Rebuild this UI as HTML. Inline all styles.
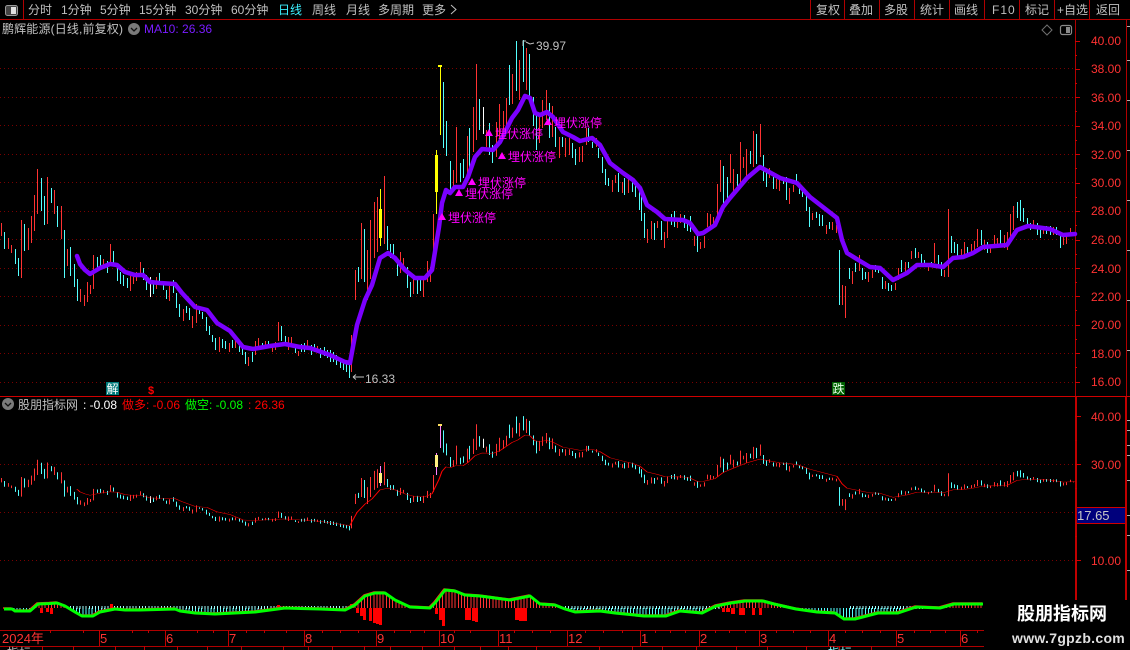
<!DOCTYPE html>
<html><head><meta charset="utf-8"><style>
html,body{margin:0;padding:0;background:#000;width:1130px;height:650px;overflow:hidden}
svg{display:block}
text{font-family:"Liberation Sans","Noto Sans CJK SC",sans-serif;font-size:12px;fill:#c0c0c0}
.y{fill:#ff3232}
.m{fill:#ff00ff}
.t{fill:#ff3232;font-size:13px}
</style></head><body>
<svg xmlns="http://www.w3.org/2000/svg" width="1130" height="650" viewBox="0 0 1130 650">
<defs>
<g id="bars" fill="none" stroke-width="1" shape-rendering="crispEdges">
<path stroke="#ff3232" d="M1.5 223V236M8.5 238V249M11.5 245V253M21.5 220V278M28.5 228V250M31.5 216V243M34.5 195V231M37.5 169V214M47.5 177V224M54.5 190V214M61.5 206V239M67.5 249V266M80.5 289V302M84.5 295V306M87.5 282V302M90.5 285V294M93.5 255V289M103.5 259V268M110.5 244V263M130.5 273V291M133.5 273V284M136.5 272V281M140.5 262V274M156.5 277V289M169.5 286V301M183.5 309V321M192.5 316V328M196.5 304V323M219.5 337V352M229.5 343V352M235.5 340V348M248.5 357V366M255.5 341V355M258.5 338V347M265.5 341V348M272.5 344V352M275.5 342V350M278.5 322V341M288.5 337V350M291.5 337V347M298.5 351V356M307.5 340V350M317.5 346V353M351.5 335V372M355.5 270V300M361.5 223V279M367.5 250V300M370.5 220V279M374.5 202V258M377.5 197V252M384.5 176V244M400.5 252V273M403.5 258V267M413.5 276V294M423.5 276V297M427.5 261V282M430.5 267V282M433.5 214V264M453.5 170V190M456.5 127V183M467.5 136V177M473.5 107V152M476.5 64V140M486.5 130V147M496.5 122V157M499.5 104V145M503.5 111V137M506.5 98V127M512.5 74V104M519.5 60V100M526.5 48V90M539.5 113V143M542.5 100V128M546.5 90V120M552.5 106V137M559.5 137V158M565.5 138V157M569.5 138V155M579.5 147V162M582.5 146V162M586.5 128V145M596.5 138V147M612.5 180V192M615.5 175V183M622.5 182V193M628.5 177V193M647.5 229V243M651.5 221V239M657.5 221V228M664.5 232V248M667.5 218V238M677.5 218V228M680.5 214V223M694.5 236V246M700.5 242V249M704.5 236V248M707.5 213V227M710.5 214V227M713.5 217V225M717.5 184V220M720.5 160V192M730.5 154V183M733.5 169V192M740.5 142V183M743.5 157V168M746.5 149V178M753.5 131V167M760.5 124V157M769.5 168V178M776.5 179V189M779.5 178V191M789.5 188V204M793.5 185V192M812.5 213V220M826.5 225V234M832.5 222V230M836.5 225V233M842.5 285V305M845.5 286V318M852.5 271V284M859.5 255V271M868.5 272V282M872.5 270V278M885.5 281V289M895.5 283V290M898.5 268V280M905.5 262V273M911.5 251V259M918.5 252V258M928.5 264V271M934.5 243V263M944.5 270V277M948.5 209V277M961.5 249V258M964.5 242V255M971.5 244V253M974.5 241V250M977.5 229V247M984.5 240V250M990.5 245V253M994.5 235V248M997.5 238V248M1004.5 235V248M1007.5 232V250M1010.5 214V237M1013.5 206V230M1033.5 220V228M1043.5 226V234M1053.5 227V235M1063.5 237V245M1066.5 235V244M1070.5 228V235M1073.5 233V236"/>
<path stroke="#54ffff" d="M4.5 232V249M15.5 249V264M18.5 258V276M24.5 224V251M41.5 178V211M44.5 196V225M51.5 188V203M57.5 206V227M64.5 230V278M70.5 247V276M74.5 264V287M77.5 279V301M97.5 257V267M100.5 255V267M107.5 261V273M113.5 251V263M117.5 265V281M120.5 272V284M123.5 275V286M127.5 278V288M143.5 268V280M146.5 275V290M153.5 281V294M159.5 273V285M163.5 282V290M166.5 290V299M173.5 280V293M176.5 293V308M179.5 304V317M186.5 306V313M189.5 308V320M199.5 310V314M202.5 312V319M206.5 317V331M209.5 326V335M212.5 335V342M215.5 338V350M222.5 339V348M225.5 341V349M232.5 340V348M239.5 343V352M242.5 348V355M245.5 352V364M252.5 352V362M262.5 343V348M268.5 341V348M281.5 326V341M285.5 336V346M295.5 348V353M301.5 344V352M304.5 343V352M311.5 345V355M314.5 344V352M320.5 348V358M324.5 347V356M327.5 350V358M330.5 350V362M333.5 352V362M336.5 355V365M340.5 358V368M343.5 360V370M346.5 362V372M349.5 365V378M358.5 267V282M364.5 229V282M387.5 226V250M390.5 244V258M393.5 244V258M397.5 258V276M407.5 267V288M410.5 282V297M417.5 276V294M420.5 279V291M443.5 82V148M446.5 121V156M450.5 161V190M460.5 163V182M463.5 159V178M469.5 128V168M479.5 99V130M489.5 123V155M492.5 145V163M509.5 65V105M516.5 41V91M523.5 40V82M529.5 54V97M533.5 97V126M536.5 113V150M549.5 103V138M555.5 127V147M562.5 137V147M572.5 143V158M575.5 149V165M588.5 128V142M592.5 142V148M598.5 148V158M602.5 157V173M605.5 169V185M608.5 178V186M618.5 173V192M624.5 178V195M632.5 178V192M635.5 185V197M639.5 190V210M641.5 197V221M644.5 213V238M654.5 223V240M661.5 221V240M671.5 214V225M674.5 211V227M684.5 215V228M687.5 220V231M690.5 216V232M697.5 232V252M723.5 166V207M727.5 177V198M737.5 174V186M750.5 151V164M756.5 134V164M763.5 155V181M766.5 170V187M773.5 177V189M783.5 178V184M786.5 177V200M796.5 174V185M799.5 186V194M802.5 188V197M806.5 193V211M809.5 207V227M816.5 212V218M819.5 214V226M822.5 215V226M829.5 222V229M839.5 250V305M849.5 268V279M855.5 263V272M862.5 268V280M865.5 272V279M875.5 265V272M878.5 267V273M882.5 277V289M888.5 283V291M891.5 285V291M901.5 260V272M908.5 262V268M915.5 248V258M921.5 254V265M924.5 260V267M931.5 262V267M938.5 255V265M941.5 262V276M951.5 236V253M954.5 242V253M957.5 244V257M967.5 247V253M981.5 230V245M987.5 242V253M1000.5 230V247M1017.5 202V218M1020.5 200V221M1023.5 208V222M1027.5 218V228M1030.5 223V230M1037.5 223V235M1040.5 227V238M1046.5 226V234M1050.5 226V235M1056.5 227V235M1060.5 232V248"/>
<path stroke="#ffffff" d="M150.5 277V297M483.5 107V134"/>
</g>
<polyline id="ma" fill="none" stroke-linejoin="round" stroke-linecap="round" points="77,256 80,264 85,270 90,274 100,268 110,264 117,265 125,272 135,275 143,275 150,282 160,283 175,284 182,293 195,307 207,310 217,323 230,331 243,347 253,349 270,346 285,344 300,347 310,348 330,355 345,362 350,363 352,352 357,325 365,300 372,285 380,258 388,253 395,258 405,270 415,278 425,278 432,270 439,227 442,203 446,190 450,193 455,187 463,187 468,177 475,157 482,149 493,150 500,142 512,118 518,110 525,96 530,98 535,113 540,115 547,112 553,117 563,132 573,137 580,141 592,138 600,145 610,163 623,173 633,180 640,188 647,205 657,212 665,219 683,220 690,223 698,234 703,233 715,225 723,207 730,198 747,178 760,167 780,178 797,183 810,197 837,218 842,240 847,253 860,261 870,267 880,268 893,280 907,273 917,265 930,265 943,267 953,258 963,257 973,253 983,247 1007,245 1017,230 1028,226 1050,229 1063,235 1075,234"/>
<polyline id="gl" fill="none" stroke-linejoin="round" points="4,609 12,609 15,611 30,611 38,604 50,603.5 57,603 65,606 75,612 82,616 93,616 100,612 115,609 125,610 140,610 175,609 180,611 195,613 215,614 235,613 255,612 270,610 285,608 300,608.5 320,609 345,610 355,605 365,596 375,593 385,593 395,600 410,607 430,608 435,603 445,590 455,591 465,595 480,596 495,598 510,600 530,596 540,604 555,605 565,609 575,612 600,611 615,613 644,616 666,616 680,611 702,613 716,606 731,603 745,601 763,601 774,604 796,609 817,612 835,613 844,619 855,619 878,613 898,613 916,607 940,608 954,604 983,604"/>
<clipPath id="hc"><polygon points="4,609 12,609 15,611 30,611 38,604 50,603.5 57,603 65,606 75,612 82,616 93,616 100,612 115,609 125,610 140,610 175,609 180,611 195,613 215,614 235,613 255,612 270,610 285,608 300,608.5 320,609 345,610 355,605 365,596 375,593 385,593 395,600 410,607 430,608 435,603 445,590 455,591 465,595 480,596 495,598 510,600 530,596 540,604 555,605 565,609 575,612 600,611 615,613 644,616 666,616 680,611 702,613 716,606 731,603 745,601 763,601 774,604 796,609 817,612 835,613 844,619 855,619 878,613 898,613 916,607 940,608 954,604 983,604 983,608 4,608"/></clipPath>
</defs>

<!-- toolbar -->
<g shape-rendering="crispEdges" fill="#b00000">
<rect x="0" y="19" width="1130" height="1"/>
<rect x="23" y="0" width="1" height="19"/>
<rect x="810" y="0" width="1" height="19"/><rect x="844" y="0" width="1" height="19"/><rect x="879" y="0" width="1" height="19"/><rect x="914" y="0" width="1" height="19"/><rect x="949" y="0" width="1" height="19"/><rect x="984" y="0" width="1" height="19"/><rect x="1019" y="0" width="1" height="19"/><rect x="1054" y="0" width="1" height="19"/><rect x="1089" y="0" width="1" height="19"/>
<rect x="1075" y="20" width="1" height="376"/>
<rect x="1126" y="20" width="1" height="376"/>
<rect x="0" y="396" width="1130" height="1" fill="#d00000"/>
<rect x="1075" y="397" width="2" height="233" fill="#c00000"/>
<rect x="1125" y="397" width="2" height="233" fill="#c00000"/>
<rect x="0" y="630" width="984" height="1"/>
<rect x="0" y="646" width="984" height="1"/>
</g>
<rect x="5.5" y="5.5" width="12" height="10" rx="2" fill="#444" stroke="#9a9a9a"/>
<rect x="11" y="7" width="5" height="7" fill="#e0e0e0"/>
<text x="28" y="14">分时</text>
<text x="61" y="14">1分钟</text>
<text x="100" y="14">5分钟</text>
<text x="139" y="14">15分钟</text>
<text x="185" y="14">30分钟</text>
<text x="231" y="14">60分钟</text>
<text x="278" y="14" style="fill:#3cf0ff">日线</text>
<text x="312" y="14">周线</text>
<text x="346" y="14">月线</text>
<text x="378" y="14">多周期</text>
<text x="422" y="14">更多</text>
<path d="M451 5l5 4.5-5 4.5" fill="none" stroke="#c0c0c0"/>
<text x="816" y="14">复权</text><text x="849" y="14">叠加</text><text x="884" y="14">多股</text><text x="920" y="14">统计</text><text x="954" y="14">画线</text><text x="992" y="14" letter-spacing="1">F10</text><text x="1025" y="14">标记</text><text x="1057" y="14">+自选</text><text x="1096" y="14">返回</text>

<!-- info row -->
<text x="2" y="33" letter-spacing="0.150">鹏辉能源(日线,前复权)</text>
<circle cx="134" cy="29" r="6" fill="#7a7a7a"/><path d="M131 28l3 3 3-3" fill="none" stroke="#111" stroke-width="1.3"/>
<text x="144" y="33" style="fill:#7a1cff">MA10: 26.36</text>
<path d="M1047 25l5 5-5 5-5-5z" fill="none" stroke="#707070"/>
<rect x="1060.5" y="25.5" width="11" height="9" rx="2" fill="#000" stroke="#8a8a8a" stroke-width="1.2"/><rect x="1066" y="27" width="4" height="6" fill="#8a8a8a"/>

<!-- grid -->
<g stroke="#7a0000" stroke-dasharray="1 3" shape-rendering="crispEdges">
<path d="M0 68.5H1075M0 97.5H1075M0 125.5H1075M0 154.5H1075M0 182.5H1075M0 211.5H1075M0 239.5H1075M0 268.5H1075M0 296.5H1075M0 325.5H1075M0 353.5H1075M0 382.5H1075M0 464.5H1075M0 512.5H1075M0 560.5H1075"/>
</g>

<!-- main bars -->
<use href="#bars"/>
<g shape-rendering="crispEdges" fill="#ffff00">
<rect x="440" y="65" width="1" height="70"/><rect x="438" y="65" width="4" height="2"/>
<rect x="436" y="150" width="1" height="64"/><rect x="435" y="155" width="3" height="37"/>
<rect x="380" y="189" width="1" height="57"/><rect x="379" y="209" width="3" height="29"/>
</g>
<use href="#ma" stroke="#7b00ff" stroke-width="4.500"/>

<!-- signals -->
<g fill="#ff00ff">
<path d="M442 213l4 7h-8zM459 189l4 7h-8zM472 178l4 7h-8zM489 129l4 7h-8zM502 152l4 7h-8zM548 118l4 7h-8z"/>
</g>
<text class="m" x="448" y="222">埋伏涨停</text>
<text class="m" x="465" y="198">埋伏涨停</text>
<text class="m" x="478" y="187">埋伏涨停</text>
<text class="m" x="495" y="138">埋伏涨停</text>
<text class="m" x="508" y="161">埋伏涨停</text>
<text class="m" x="554" y="127">埋伏涨停</text>

<!-- hi/lo -->
<path d="M523 46V41h3M526 42l4 2 4-1" fill="none" stroke="#c0c0c0"/>
<text x="536" y="50">39.97</text>
<path d="M353 377H364M353 377l3-2.5M353 377l3 2.5" fill="none" stroke="#c0c0c0"/>
<text x="365" y="383">16.33</text>

<!-- markers -->
<rect x="106" y="382" width="13" height="13" fill="#007a7a"/>
<text x="106.500" y="393" style="fill:#fff">解</text>
<text x="148" y="394" style="fill:#ff0000;font-weight:bold;font-size:11px">$</text>
<rect x="832" y="382" width="13" height="13" fill="#006000"/>
<text x="832.500" y="393" style="fill:#e8ffe8">跌</text>

<!-- y axis main -->
<g stroke="#d00000" shape-rendering="crispEdges">
<path d="M1075 41.5h5M1075 69.500h5M1075 97.500h5M1075 126.500h5M1075 154.500h5M1075 183.500h5M1075 211.500h5M1075 240.500h5M1075 268.500h5M1075 296.500h5M1075 325.500h5M1075 353.500h5M1075 382.500h5M1075 55.500h2M1075 83.500h2M1075 111.500h2M1075 140.500h2M1075 168.500h2M1075 197.500h2M1075 225.500h2M1075 254.500h2M1075 282.500h2M1075 310.500h2M1075 339.500h2M1075 367.500h2"/>
<path d="M1075 416.500h6M1075 464.500h6M1075 560.500h6M1075 440.500h2M1075 488.500h2M1075 536.500h2M1075 584.500h2"/>
</g>
<text class="y" x="1091" y="45">40.00</text><text class="y" x="1091" y="73">38.00</text><text class="y" x="1091" y="102">36.00</text><text class="y" x="1091" y="130">34.00</text><text class="y" x="1091" y="159">32.00</text><text class="y" x="1091" y="187">30.00</text><text class="y" x="1091" y="215">28.00</text><text class="y" x="1091" y="244">26.00</text><text class="y" x="1091" y="273">24.00</text><text class="y" x="1091" y="301">22.00</text><text class="y" x="1091" y="329">20.00</text><text class="y" x="1091" y="358">18.00</text><text class="y" x="1091" y="386">16.00</text>
<text class="y" x="1091" y="421">40.00</text><text class="y" x="1091" y="469">30.00</text><text class="y" x="1091" y="565">10.00</text>
<g stroke="#b0b0b0" shape-rendering="crispEdges"><path d="M1127 26.500h3M1127 60.500h3M1127 100.500h3M1127 150.500h3M1127 200.500h3M1127 250.500h3M1127 300.500h3M1127 350.500h3M1127 420.500h3M1127 430.500h3M1127 445.500h3M1127 455.500h3M1127 480.500h3M1127 515.500h3M1127 535.500h3M1127 570.500h3"/></g>

<!-- lower header -->
<circle cx="8" cy="404" r="6" fill="#7a7a7a"/><path d="M5 403l3 3 3-3" fill="none" stroke="#111" stroke-width="1.3"/>
<text x="18" y="409">股朋指标网</text>
<text x="83" y="409" style="fill:#fff">: -0.08</text>
<text x="122" y="409" style="fill:#ff0000">做多: -0.06</text>
<text x="185" y="409" style="fill:#00ff00">做空: -0.08</text>
<text x="248" y="409" style="fill:#ff0000">: 26.36</text>

<!-- lower bars -->
<g transform="translate(0,402.64) scale(1,0.338)">
<use href="#bars"/>
</g>
<g shape-rendering="crispEdges">
<rect x="440" y="425" width="1" height="23" fill="#ff80ff"/><rect x="438" y="424" width="4" height="2" fill="#ffe060"/>
<rect x="436" y="453" width="1" height="22" fill="#ff80ff"/><rect x="435" y="455" width="3" height="12" fill="#fff080"/>
<rect x="380" y="466" width="1" height="20" fill="#ff80ff"/><rect x="379" y="473" width="3" height="10" fill="#fff080"/>
</g>
<use href="#ma" stroke="#ff0000" stroke-width="1.200" transform="translate(0,402.64) scale(1,0.338)" style="vector-effect:non-scaling-stroke"/>

<!-- 17.65 box -->
<rect x="1077" y="507" width="48" height="16" fill="#00007c"/>
<rect x="1077" y="507" width="48" height="1" fill="#d00000"/><rect x="1077" y="523" width="48" height="1" fill="#d00000"/>
<text x="1077" y="520" style="fill:#c8c8c8;font-size:13px">17.65</text>

<!-- MACD-like -->
<g clip-path="url(#hc)" shape-rendering="crispEdges">
<line x1="4" x2="984" y1="590" y2="590" stroke="#ff3232" stroke-width="36" stroke-dasharray="1 2.13"/>
<line x1="4" x2="984" y1="619" y2="619" stroke="#54ffff" stroke-width="22" stroke-dasharray="1 2.13"/>
</g>
<g stroke-dasharray="1 2.13" stroke="#a0ffff" stroke-width="3" shape-rendering="crispEdges">
<line x1="70" x2="350" y1="607.500" y2="607.500"/><line x1="565" x2="720" y1="607.500" y2="607.500"/><line x1="850" x2="925" y1="607.500" y2="607.500"/>
</g>
<g fill="#ff0000" shape-rendering="crispEdges">
<path d="M40 608h3v5h-3zM46 608h3v4h-3zM50 608h3v6h-3zM110 604h3v4h-3zM277 605h3v3h-3zM350 604h4v4h-4zM356 608h3v5h-3zM360 608h3v8h-3zM363 608h3v12h-3zM369 608h3v13h-3zM373 608h3v15h-3zM376 608h3v16h-3zM379 608h3v17h-3zM435 608h3v6h-3zM439 608h3v12h-3zM442 608h3v18h-3zM465 608h6v12h-6zM472 608h3v13h-3zM475 608h3v14h-3zM515 608h4v12h-4zM519 608h3v13h-3zM522 608h5v13h-5zM722 608h3v4h-3zM726 608h4v4h-4zM731 608h4v6h-4zM739 608h6v7h-6zM752 608h3v7h-3zM759 608h3v7h-3z"/>
</g>
<use href="#gl" stroke="#ff2020" stroke-width="1.500" transform="translate(-1,-1)"/>
<use href="#gl" stroke="#00ff00" stroke-width="3"/>

<!-- time axis -->
<g stroke="#c00000" shape-rendering="crispEdges">
<path d="M99.500 630v16M165.500 630v16M228.500 630v16M304.500 630v16M376.500 630v16M439.500 630v16M498.500 630v16M567.500 630v16M640.500 630v16M699.500 630v16M759.500 630v16M828.500 630v16M896.500 630v16M960.500 630v16"/>
<path d="M50.500 630v3M83.500 630v3M132.500 630v3M148.500 630v3M197.500 630v3M213.500 630v3M246.500 630v3M264.500 630v3M286.500 630v3M322.500 630v3M340.500 630v3M358.500 630v3M394.500 630v3M410.500 630v3M424.500 630v3M454.500 630v3M470.500 630v3M514.500 630v3M532.500 630v3M550.500 630v3M585.500 630v3M603.500 630v3M622.500 630v3M655.500 630v3M670.500 630v3M685.500 630v3M715.500 630v3M729.500 630v3M745.500 630v3M776.500 630v3M793.500 630v3M810.500 630v3M845.500 630v3M862.500 630v3M880.500 630v3M914.500 630v3M930.500 630v3M945.500 630v3M977.500 630v3"/>
<path d="M42.500 646v4M73.500 646v4M115.500 646v4M144.500 646v4M177.500 646v4M207.500 646v4M241.500 646v4M283.500 646v4M308.500 646v4M332.500 646v4M364.500 646v4M390.500 646v4M422.500 646v4M454.500 646v4M480.500 646v4M508.500 646v4M536.500 646v4M599.500 646v4M632.500 646v4M662.500 646v4M696.500 646v4M736.500 646v4M767.500 646v4M806.500 646v4M839.500 646v4M871.500 646v4"/>
</g>
<text class="t" x="2" y="643">2024年</text>
<text class="t" x="100" y="643">5</text><text class="t" x="166" y="643">6</text><text class="t" x="229" y="643">7</text><text class="t" x="305" y="643">8</text><text class="t" x="377" y="643">9</text><text class="t" x="440" y="643">10</text><text class="t" x="499" y="643">11</text><text class="t" x="568" y="643">12</text><text class="t" x="641" y="643">1</text><text class="t" x="700" y="643">2</text><text class="t" x="760" y="643">3</text><text class="t" x="829" y="643">4</text><text class="t" x="897" y="643">5</text><text class="t" x="961" y="643">6</text>
<text x="7" y="657">指标</text><text x="45" y="657">一</text><text x="816" y="657">一</text><text x="828" y="657" style="fill:#80ffff">指标</text>

<!-- watermark -->
<rect x="985" y="600" width="145" height="50" fill="#000"/>
<rect x="1075" y="580" width="2" height="20" fill="#c00000"/><rect x="1125" y="580" width="2" height="20" fill="#c00000"/>
<text x="1017" y="620" style="fill:#fff;font-size:18px;font-weight:bold">股朋指标网</text>
<text x="1012" y="643" style="fill:#e0e0e0;font-size:14px;font-weight:bold" letter-spacing="0.300">www.7gpzb.com</text>
</svg>
</body></html>
